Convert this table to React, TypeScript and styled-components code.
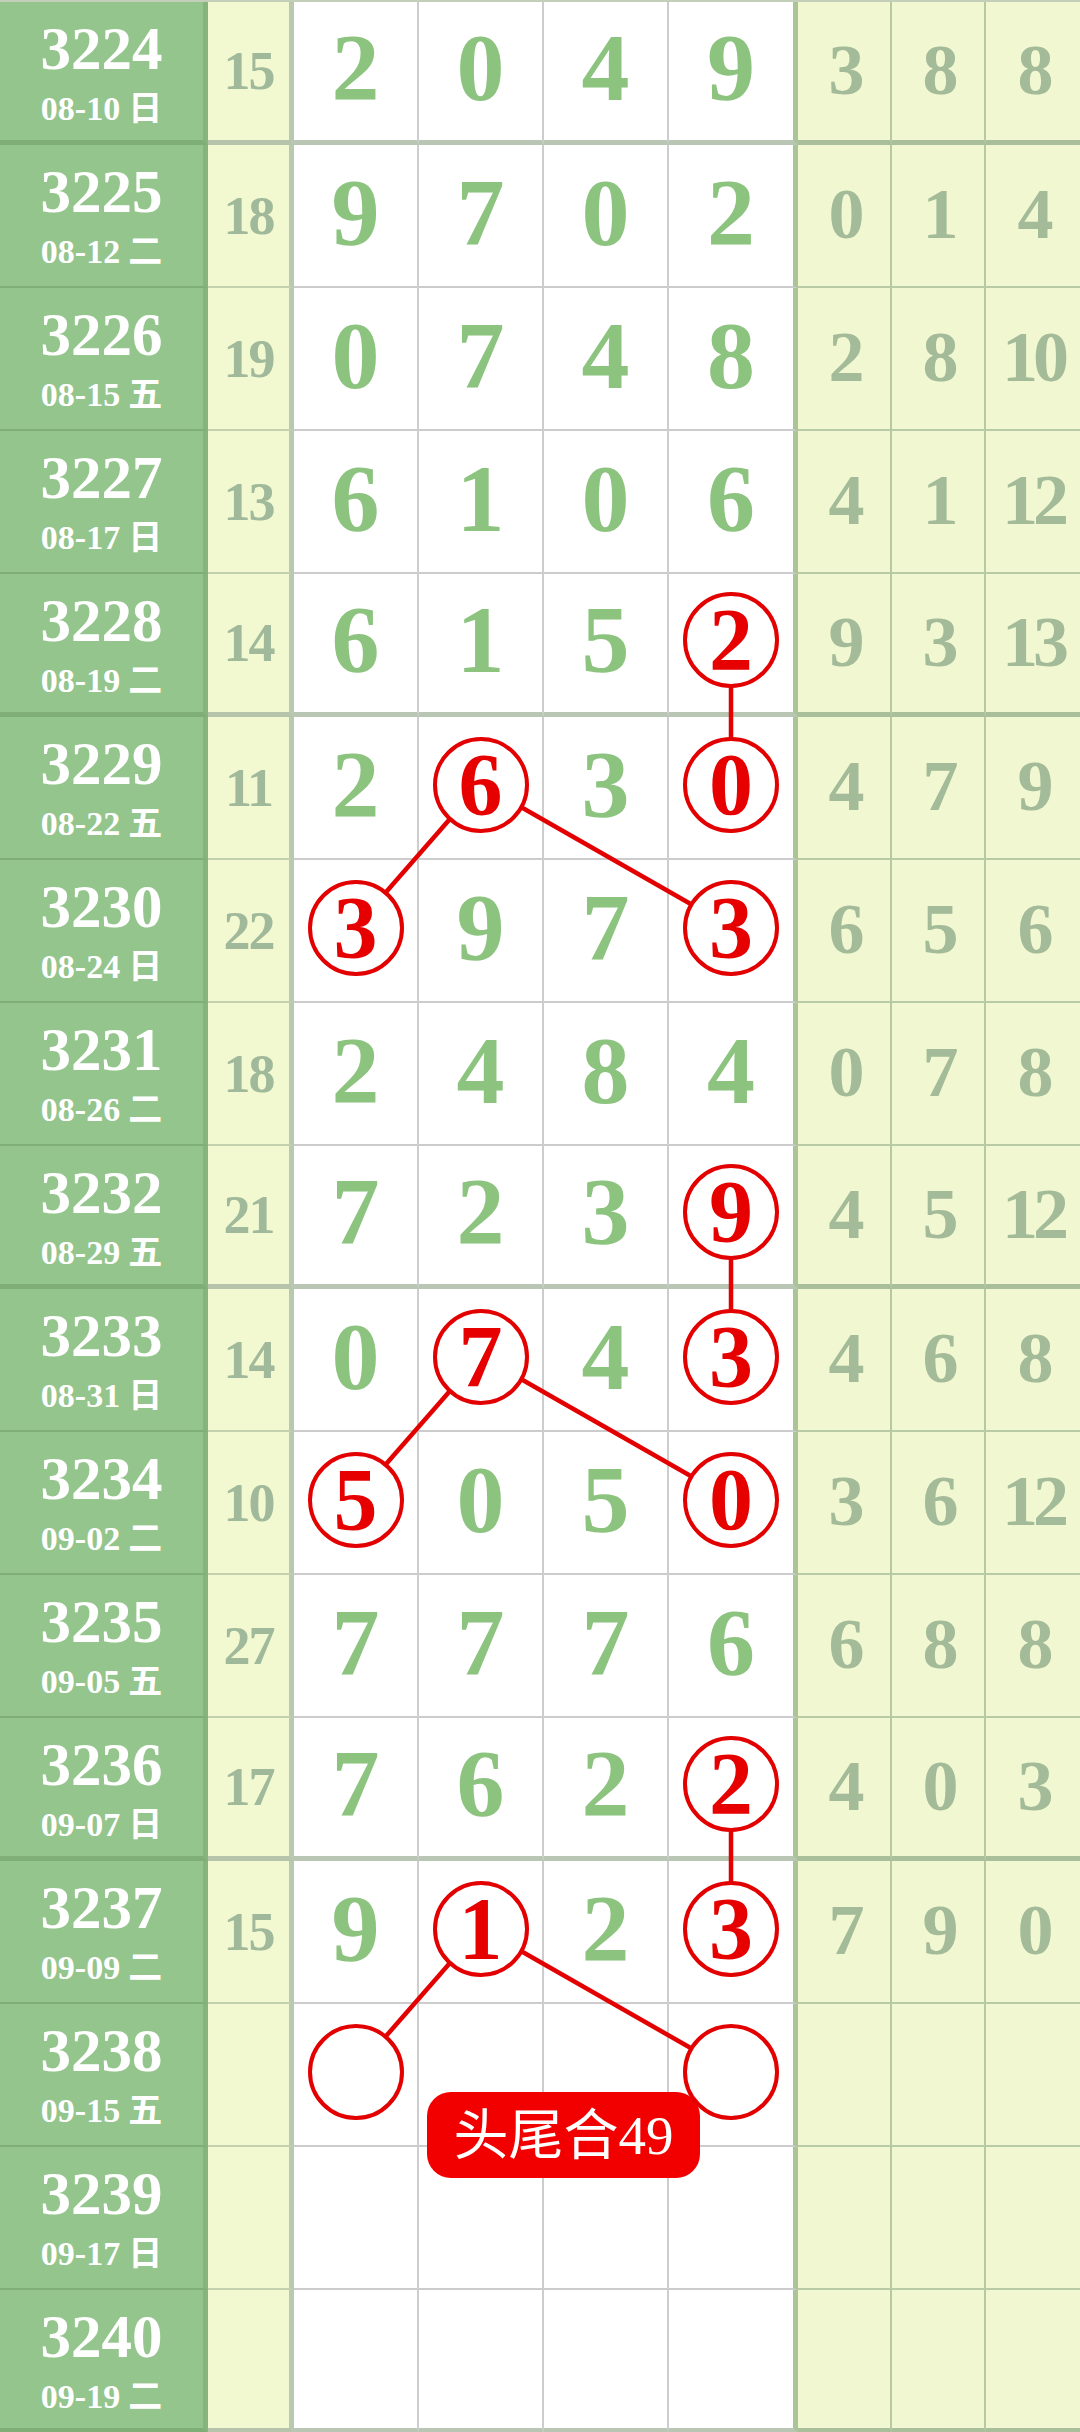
import React from "react";
import styled, { createGlobalStyle } from "styled-components";

const GlobalStyle = createGlobalStyle`
  html, body { margin: 0; padding: 0; background: #ffffff; }
  body { font-family: "Liberation Serif", "Noto Sans CJK SC", serif; }
`;

const ROW_H = 143;
const TOP = 2;
// centres of the four digit columns, used for the connecting lines
const COL_X = [355.5, 480.5, 605.5, 731];

type Draw = {
  issue: string;
  date: string;
  day: string;
  sum?: number;
  digits?: (number | null)[];
  tails?: number[];
  ringed?: number[];
};

const draws: Draw[] = [
  { issue: "3224", date: "08-10", day: "日", sum: 15, digits: [2, 0, 4, 9], tails: [3, 8, 8] },
  { issue: "3225", date: "08-12", day: "二", sum: 18, digits: [9, 7, 0, 2], tails: [0, 1, 4] },
  { issue: "3226", date: "08-15", day: "五", sum: 19, digits: [0, 7, 4, 8], tails: [2, 8, 10] },
  { issue: "3227", date: "08-17", day: "日", sum: 13, digits: [6, 1, 0, 6], tails: [4, 1, 12] },
  { issue: "3228", date: "08-19", day: "二", sum: 14, digits: [6, 1, 5, 2], tails: [9, 3, 13], ringed: [3] },
  { issue: "3229", date: "08-22", day: "五", sum: 11, digits: [2, 6, 3, 0], tails: [4, 7, 9], ringed: [1, 3] },
  { issue: "3230", date: "08-24", day: "日", sum: 22, digits: [3, 9, 7, 3], tails: [6, 5, 6], ringed: [0, 3] },
  { issue: "3231", date: "08-26", day: "二", sum: 18, digits: [2, 4, 8, 4], tails: [0, 7, 8] },
  { issue: "3232", date: "08-29", day: "五", sum: 21, digits: [7, 2, 3, 9], tails: [4, 5, 12], ringed: [3] },
  { issue: "3233", date: "08-31", day: "日", sum: 14, digits: [0, 7, 4, 3], tails: [4, 6, 8], ringed: [1, 3] },
  { issue: "3234", date: "09-02", day: "二", sum: 10, digits: [5, 0, 5, 0], tails: [3, 6, 12], ringed: [0, 3] },
  { issue: "3235", date: "09-05", day: "五", sum: 27, digits: [7, 7, 7, 6], tails: [6, 8, 8] },
  { issue: "3236", date: "09-07", day: "日", sum: 17, digits: [7, 6, 2, 2], tails: [4, 0, 3], ringed: [3] },
  { issue: "3237", date: "09-09", day: "二", sum: 15, digits: [9, 1, 2, 3], tails: [7, 9, 0], ringed: [1, 3] },
  { issue: "3238", date: "09-15", day: "五", digits: [null, null, null, null], ringed: [0, 3] },
  { issue: "3239", date: "09-17", day: "日" },
  { issue: "3240", date: "09-19", day: "二" },
];

// [fromRow, fromCol, toRow, toCol]
const links: [number, number, number, number][] = [
  [4, 3, 5, 3],
  [5, 1, 6, 0],
  [5, 1, 6, 3],
  [8, 3, 9, 3],
  [9, 1, 10, 0],
  [9, 1, 10, 3],
  [12, 3, 13, 3],
  [13, 1, 14, 0],
  [13, 1, 14, 3],
];

const Board = styled.div`
  position: relative;
  width: 1080px;
  height: 2432px;
  overflow: hidden;
  border-top: ${TOP}px solid #c3cfb9;
  box-sizing: border-box;
`;

const Row = styled.div`
  display: grid;
  grid-template-columns: 208px 86px 125px 125px 125px 129px 94px 94px 94px;
  height: ${ROW_H}px;
`;

const IssueCell = styled.div<{ $thick: boolean }>`
  box-sizing: border-box;
  background: #94c58c;
  border-right: 5px solid #86b47c;
  border-bottom: ${(p) => (p.$thick ? 5 : 2)}px solid #80ae77;
  display: flex;
  flex-direction: column;
  align-items: center;
  padding-top: 17px;
  color: #ffffff;
  font-weight: bold;
`;

const IssueNo = styled.div`
  font-size: 61px;
  line-height: 60px;
  height: 60px;
`;

const IssueDate = styled.div`
  margin-top: 10px;
  font-size: 34px;
  line-height: 34px;
  height: 34px;
  white-space: nowrap;
`;

const Weekday = styled.span`
  font-family: "Noto Sans CJK SC", sans-serif;
  font-weight: bold;
  margin-left: 8px;
`;

const SumCell = styled.div<{ $thick: boolean }>`
  box-sizing: border-box;
  background: #f2f8d0;
  border-right: 5px solid #b9c9b1;
  border-bottom: ${(p) => (p.$thick ? "5px solid #b5c4aa" : "2px solid #c3d1ad")};
  display: flex;
  align-items: center;
  justify-content: center;
  color: #a0b99a;
  font-size: 54px;
  font-weight: bold;
  letter-spacing: -2px;
`;

const DigitCell = styled.div<{ $thick: boolean; $edge: boolean }>`
  box-sizing: border-box;
  background: #ffffff;
  border-right: ${(p) => (p.$edge ? "5px solid #a9c596" : "2px solid #cdcdcd")};
  border-bottom: ${(p) => (p.$thick ? "5px solid #bac6b4" : "2px solid #cccccc")};
  display: flex;
  align-items: center;
  justify-content: center;
  padding-bottom: 6px;
  color: #8cc47f;
  font-size: 96px;
  line-height: 1;
  font-weight: bold;
`;

const Ring = styled.div`
  position: relative;
  z-index: 2;
  box-sizing: border-box;
  width: 96px;
  height: 96px;
  border: 4px solid #e30000;
  border-radius: 50%;
  background: #ffffff;
  display: flex;
  align-items: center;
  justify-content: center;
  color: #e60000;
  font-size: 88px;
  line-height: 1;
  font-weight: bold;
`;

const TailCell = styled.div<{ $thick: boolean; $last: boolean }>`
  box-sizing: border-box;
  background: #f1f7d0;
  border-right: ${(p) => (p.$last ? "none" : "2px solid #b6c9a2")};
  border-bottom: ${(p) => (p.$thick ? "5px solid #a9bf9b" : "2px solid #b9cba5")};
  display: flex;
  align-items: center;
  justify-content: center;
  padding-bottom: 3px;
  color: #a3bb99;
  font-size: 72px;
  line-height: 1;
  font-weight: bold;
  letter-spacing: -5px;
`;

const Links = styled.svg`
  position: absolute;
  left: 0;
  top: 0;
  z-index: 1;
  pointer-events: none;
`;

const Badge = styled.div`
  position: absolute;
  left: 427px;
  top: 2090px;
  z-index: 1;
  width: 273px;
  height: 86px;
  border-radius: 24px;
  background: #f20000;
  color: #ffffff;
  display: flex;
  align-items: center;
  justify-content: center;
  font-family: "Liberation Serif", "Noto Sans CJK SC", serif;
  font-size: 55px;
  line-height: 1;
`;

const centerY = (row: number) => row * ROW_H + 67;

export default function App() {
  return (
    <>
      <GlobalStyle />
      <Board>
        {draws.map((d) => {
          const thick = Number(d.issue) % 4 === 0;
          return (
            <Row key={d.issue}>
              <IssueCell $thick={thick}>
                <IssueNo>{d.issue}</IssueNo>
                <IssueDate>
                  {d.date}
                  <Weekday>{d.day}</Weekday>
                </IssueDate>
              </IssueCell>
              <SumCell $thick={thick}>{d.sum ?? ""}</SumCell>
              {[0, 1, 2, 3].map((c) => {
                const v = d.digits ? d.digits[c] : null;
                const ringed = d.ringed?.includes(c);
                return (
                  <DigitCell key={c} $thick={thick} $edge={c === 3}>
                    {ringed ? <Ring>{v ?? ""}</Ring> : v ?? ""}
                  </DigitCell>
                );
              })}
              {[0, 1, 2].map((c) => (
                <TailCell key={c} $thick={thick} $last={c === 2}>
                  {d.tails ? d.tails[c] : ""}
                </TailCell>
              ))}
            </Row>
          );
        })}
        <Links width={1080} height={2432} viewBox="0 0 1080 2432">
          {links.map(([r1, c1, r2, c2], i) => (
            <line
              key={i}
              x1={COL_X[c1]}
              y1={centerY(r1)}
              x2={COL_X[c2]}
              y2={centerY(r2)}
              stroke="#e30000"
              strokeWidth={4.5}
            />
          ))}
        </Links>
        <Badge>头尾合49</Badge>
      </Board>
    </>
  );
}
